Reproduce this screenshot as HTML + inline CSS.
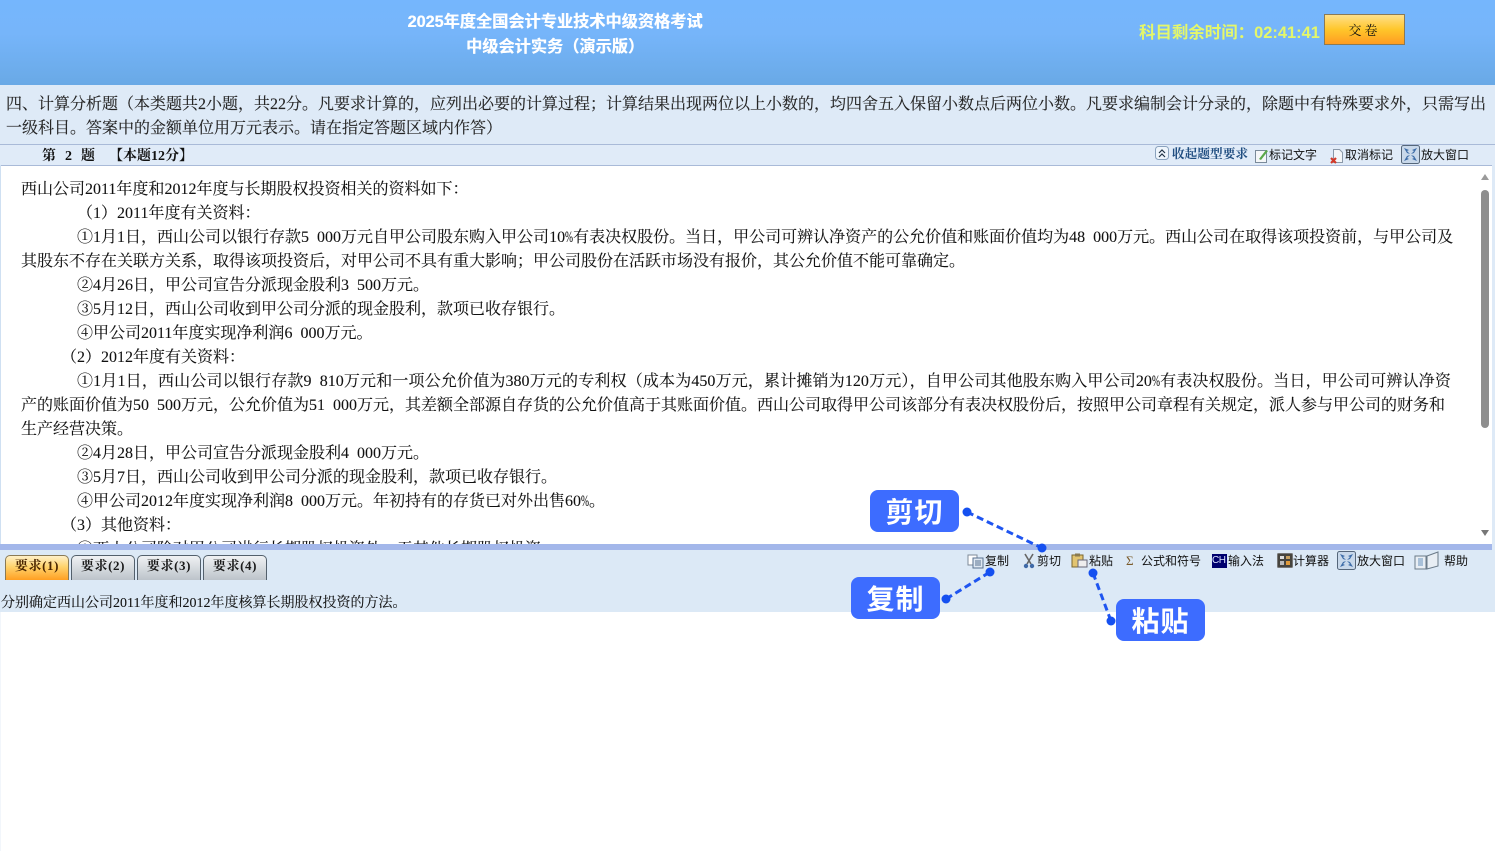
<!DOCTYPE html>
<html lang="zh-CN"><head><meta charset="utf-8"><title>中级会计实务</title>
<style>
html,body{margin:0;padding:0;width:1495px;height:851px;overflow:hidden;background:#fff}
body{position:relative;font-family:"Noto Serif CJK SC","Liberation Serif",serif;color:#000}
.a{position:absolute;white-space:nowrap}
#hd{position:absolute;left:0;top:0;width:1495px;height:85px;background:linear-gradient(#75b6fd 0,#76b5fa 40%,#69a9e6 100%)}
.t{font-family:"Liberation Sans","Noto Sans CJK SC",sans-serif;font-weight:700;color:#fff;font-size:16.200px;line-height:24px;text-align:center;left:300px;width:510px;text-shadow:.4px 0 0 #eef5ff}
#intro{position:absolute;left:0;top:85px;width:1495px;height:59px;background:#deeaf7}
.in{font-size:16px;line-height:24px;color:#222;height:24px;-webkit-text-stroke:.15px #333}
#bar{position:absolute;left:0;top:144px;width:1495px;background:#e0ebf8;border-top:1px solid #a9bad8;border-bottom:1px solid #a9bad8;box-sizing:border-box;height:22px}
.l{font-size:16px;line-height:24px;height:24px;color:#111;-webkit-text-stroke:.1px #111}
i{font-style:normal;font-family:"Liberation Serif",serif;font-size:1em;word-spacing:.25em}
b.p{font:inherit;font-family:"Liberation Serif",serif;display:inline-block;width:.5em;transform:scaleX(.6);transform-origin:0 50%}
.s{font-size:12px;line-height:16px;color:#111;font-family:"Noto Sans CJK SC",sans-serif}
#side{position:absolute;left:0;top:165px;width:1px;height:380px;background:#cfe0f2}
#side2{position:absolute;left:0;top:612px;width:1px;height:239px;background:#f2f6fb}
#rs{position:absolute;left:1492px;top:165px;width:3px;height:385px;background:#deeaf7}
#sp{position:absolute;left:0;top:544px;width:1492px;height:6px;background:#a3b7ea}
#low{position:absolute;left:0;top:550px;width:1495px;height:62px;background:#dce9f6}
.tab{position:absolute;top:555px;width:64px;height:25px;box-sizing:border-box;border:1px solid #53606c;border-bottom:0;border-radius:5px 5px 0 0;background:linear-gradient(#f0f2f4,#bcc3ca);font-size:13px;font-weight:700;line-height:18px;text-align:center;color:#1a1a1a;letter-spacing:.6px}
.tab.on{background:linear-gradient(#fff0c8 0,#ffd36c 45%,#ff9f22 100%);border-color:#8a7a55;color:#4a2500}
.cb{position:absolute;background:#3d6cff;color:#fff;border-radius:8px;font-family:"Noto Sans CJK SC",sans-serif;font-weight:700;font-size:28px;letter-spacing:1px;text-align:center;width:89px;height:42px;line-height:42px}
.q{font-size:14px;line-height:18px;font-weight:700;color:#111}
</style></head><body>
<div id="hd"></div>
<div class="a t" style="top:10px">2025年度全国会计专业技术中级资格考试</div>
<div class="a t" style="top:35px">中级会计实务（演示版）</div>
<div class="a" style="left:1139px;top:21px;font:700 16.450px/24px 'Liberation Sans','Noto Sans CJK SC',sans-serif;color:#e4f76a">科目剩余时间：02:41:41</div>
<div class="a" style="left:1324px;top:14px;width:81px;height:31px;box-sizing:border-box;border:1px solid #8b7a55;background:linear-gradient(#ffe08a,#ffc62a 50%,#ff9c22);text-align:center;font-size:13px;line-height:29px;letter-spacing:3px;color:#111">交卷</div>

<div id="intro"></div>
<div class="a in" style="left:6px;top:91px;width:1480px;text-align:justify;text-align-last:justify">四、计算分析题（本类题共<i>2</i>小题，共<i>22</i>分。凡要求计算的，应列出必要的计算过程；计算结果出现两位以上小数的，均四舍五入保留小数点后两位小数。凡要求编制会计分录的，除题中有特殊要求外，只需写出</div>
<div class="a in" style="left:6px;top:115px">一级科目。答案中的金额单位用万元表示。请在指定答题区域内作答）</div>

<div id="bar"></div>
<div class="a q" style="left:42px;top:146px">第</div>
<div class="a q" style="left:65px;top:146px"><i>2</i></div>
<div class="a q" style="left:81px;top:146px">题</div>
<div class="a q" style="left:109px;top:146px">【本题<i>12</i>分】</div>

<svg class="a" style="left:1155px;top:146px" width="15" height="15"><rect x=".5" y=".5" width="13" height="13" rx="3" fill="#eef5fc" stroke="#8aa2bd"/><path d="M4 7l3-3 3 3M4 11l3-3 3 3" fill="none" stroke="#234" stroke-width="1.2"/></svg>
<div class="a s" style="left:1172px;top:145px;font-size:12.700px;font-weight:700;color:#1f4d80;font-family:'Noto Serif CJK SC',serif">收起题型要求</div>
<svg class="a" style="left:1255px;top:149px" width="14" height="14"><rect x=".5" y="1.500" width="11" height="12" fill="#f4f6f8" stroke="#7a8a9a"/><path d="M4 10l7-9 2 1-7 9z" fill="#5aa84a"/></svg>
<div class="a s" style="left:1269px;top:147px">标记文字</div>
<svg class="a" style="left:1330px;top:149px" width="14" height="15"><path d="M3.500 .5h6l3 3v10h-9z" fill="#f4f6f8" stroke="#8a98a8"/><path d="M1 9l5 5M6 9l-5 5" stroke="#d23a2a" stroke-width="2.200"/></svg>
<div class="a s" style="left:1345px;top:147px">取消标记</div>
<svg class="a" style="left:1401px;top:145px" width="20" height="20"><rect x=".5" y=".5" width="18" height="18" rx="2" fill="#c8d8ea" stroke="#55667a"/><path d="M3 3l5 2-2 1 3 3-3-1zM16 3l-5 2 2 1-3 3 3-1zM3 16l5-2-2-1 3-3-3 1zM16 16l-5-2 2-1-3-3 3 1z" fill="#3e6da8"/></svg>
<div class="a s" style="left:1421px;top:147px">放大窗口</div>

<div id="side"></div><div id="side2"></div><div id="rs"></div>
<div class="a l" style="left:21px;top:176px">西山公司<i>2011</i>年度和<i>2012</i>年度与长期股权投资相关的资料如下：</div>
<div class="a l" style="left:77px;top:200px">（<i>1</i>）<i>2011</i>年度有关资料：</div>
<div class="a l" style="left:77px;top:224px;width:1376px;text-align:justify;text-align-last:justify">①<i>1</i>月<i>1</i>日，西山公司以银行存款<i>5 000</i>万元自甲公司股东购入甲公司<i>10</i><b class="p">%</b>有表决权股份。当日，甲公司可辨认净资产的公允价值和账面价值均为<i>48 000</i>万元。西山公司在取得该项投资前，与甲公司及</div>
<div class="a l" style="left:21px;top:248px">其股东不存在关联方关系，取得该项投资后，对甲公司不具有重大影响；甲公司股份在活跃市场没有报价，其公允价值不能可靠确定。</div>
<div class="a l" style="left:77px;top:272px">②<i>4</i>月<i>26</i>日，甲公司宣告分派现金股利<i>3 500</i>万元。</div>
<div class="a l" style="left:77px;top:296px">③<i>5</i>月<i>12</i>日，西山公司收到甲公司分派的现金股利，款项已收存银行。</div>
<div class="a l" style="left:77px;top:320px">④甲公司<i>2011</i>年度实现净利润<i>6 000</i>万元。</div>
<div class="a l" style="left:61px;top:344px">（<i>2</i>）<i>2012</i>年度有关资料：</div>
<div class="a l" style="left:77px;top:368px;width:1374px;text-align:justify;text-align-last:justify">①<i>1</i>月<i>1</i>日，西山公司以银行存款<i>9 810</i>万元和一项公允价值为<i>380</i>万元的专利权（成本为<i>450</i>万元，累计摊销为<i>120</i>万元），自甲公司其他股东购入甲公司<i>20</i><b class="p">%</b>有表决权股份。当日，甲公司可辨认净资</div>
<div class="a l" style="left:21px;top:392px;width:1424px;text-align:justify;text-align-last:justify">产的账面价值为<i>50 500</i>万元，公允价值为<i>51 000</i>万元，其差额全部源自存货的公允价值高于其账面价值。西山公司取得甲公司该部分有表决权股份后，按照甲公司章程有关规定，派人参与甲公司的财务和</div>
<div class="a l" style="left:21px;top:416px">生产经营决策。</div>
<div class="a l" style="left:77px;top:440px">②<i>4</i>月<i>28</i>日，甲公司宣告分派现金股利<i>4 000</i>万元。</div>
<div class="a l" style="left:77px;top:464px">③<i>5</i>月<i>7</i>日，西山公司收到甲公司分派的现金股利，款项已收存银行。</div>
<div class="a l" style="left:77px;top:488px">④甲公司<i>2012</i>年度实现净利润<i>8 000</i>万元。年初持有的存货已对外出售<i>60</i><b class="p">%</b>。</div>
<div class="a l" style="left:61px;top:512px">（<i>3</i>）其他资料：</div>
<div class="a l" style="left:77px;top:536px">①西山公司除对甲公司进行长期股权投资外，无其他长期股权投资。</div>

<div class="a" style="left:1481px;top:174px;border:4px solid transparent;border-bottom:6px solid #9a9a9a;border-top:0"></div>
<div class="a" style="left:1481px;top:190px;width:8px;height:238px;border-radius:4px;background:#8e8e8e"></div>
<div class="a" style="left:1481px;top:530px;border:4px solid transparent;border-top:6px solid #777;border-bottom:0"></div>

<div id="low"></div>
<div id="sp"></div>
<div class="tab on" style="left:5px">要求<i>(1)</i></div>
<div class="tab" style="left:71px">要求<i>(2)</i></div>
<div class="tab" style="left:137px">要求<i>(3)</i></div>
<div class="tab" style="left:203px">要求<i>(4)</i></div>

<svg class="a" style="left:967px;top:554px" width="17" height="15"><rect x="1" y="1" width="9" height="10" fill="#fff" stroke="#7e8a98"/><rect x="6" y="4" width="10" height="10" fill="#dfe8f2" stroke="#5a7290"/><path d="M8 7h6M8 9h6M8 11h6" stroke="#5a7290"/></svg>
<div class="a s" style="left:985px;top:553px">复制</div>
<svg class="a" style="left:1023px;top:553px" width="12" height="16"><path d="M2 1l6 10M10 1L4 11" stroke="#666" stroke-width="1.600"/><circle cx="3" cy="13" r="2.200" fill="#3f6aa8"/><circle cx="9" cy="13" r="2.200" fill="#3f6aa8"/></svg>
<div class="a s" style="left:1037px;top:553px">剪切</div>
<svg class="a" style="left:1071px;top:553px" width="17" height="15"><rect x="1" y="2" width="11" height="12" fill="#e2c470" stroke="#7a6630"/><rect x="4" y="0.500" width="5" height="3" fill="#8a7a50"/><rect x="7" y="7" width="9" height="7" fill="#eee" stroke="#667"/></svg>
<div class="a s" style="left:1089px;top:553px">粘贴</div>
<div class="a s" style="left:1126px;top:553px;color:#7a5a2a;font-family:'Liberation Serif',serif;font-size:13px">Σ</div>
<div class="a s" style="left:1141px;top:553px">公式和符号</div>
<div class="a" style="left:1212px;top:554px;width:15px;height:14px;overflow:hidden;background:#00006e;color:#dfe6ff;font:10px/14px 'Liberation Sans',sans-serif;letter-spacing:-.5px">CH</div>
<div class="a s" style="left:1228px;top:553px">输入法</div>
<svg class="a" style="left:1277px;top:553px" width="16" height="15"><rect x=".5" y=".5" width="15" height="14" rx="1" fill="#46443e" stroke="#777"/><rect x="3" y="3" width="4" height="3" fill="#ddd"/><rect x="9" y="3" width="4" height="3" fill="#c8a060"/><rect x="3" y="8" width="4" height="4" fill="#bbb"/><rect x="9" y="8" width="4" height="4" fill="#e09a3a"/></svg>
<div class="a s" style="left:1293px;top:553px">计算器</div>
<svg class="a" style="left:1337px;top:551px" width="20" height="20"><rect x=".5" y=".5" width="18" height="18" rx="2" fill="#c8d8ea" stroke="#55667a"/><path d="M3 3l5 2-2 1 3 3-3-1zM16 3l-5 2 2 1-3 3 3-1zM3 16l5-2-2-1 3-3-3 1zM16 16l-5-2 2-1-3-3 3 1z" fill="#3e6da8"/></svg>
<div class="a s" style="left:1357px;top:553px">放大窗口</div>
<svg class="a" style="left:1414px;top:551px" width="26" height="19"><path d="M1 5h11v13H1zM13 5l11-4v14l-11 3z" fill="#e8eef4" stroke="#6a7a88"/><path d="M4 7h5v8H4z" fill="#a8c0d8"/></svg>
<div class="a s" style="left:1444px;top:553px">帮助</div>

<div class="a l" style="left:1px;top:590px;font-size:14px">分别确定西山公司<i>2011</i>年度和<i>2012</i>年度核算长期股权投资的方法。</div>

<svg class="a" style="left:0;top:0;pointer-events:none" width="1495" height="851">
<g fill="none" stroke="#1f55f0" stroke-width="3" stroke-dasharray="7 4">
<path d="M967 512L1042 548"/><path d="M946 599L990 572"/><path d="M1093 573L1111 621"/></g>
<g fill="#1550f0"><circle cx="967" cy="512" r="4.500"/><circle cx="1042" cy="548" r="4.500"/><circle cx="946" cy="599" r="4.500"/><circle cx="990" cy="572" r="4.500"/><circle cx="1093" cy="573" r="4.500"/><circle cx="1111" cy="621" r="4.500"/></g>
</svg>
<div class="cb" style="left:870px;top:490px">剪切</div>
<div class="cb" style="left:851px;top:577px">复制</div>
<div class="cb" style="left:1116px;top:599px">粘贴</div>
</body></html>
